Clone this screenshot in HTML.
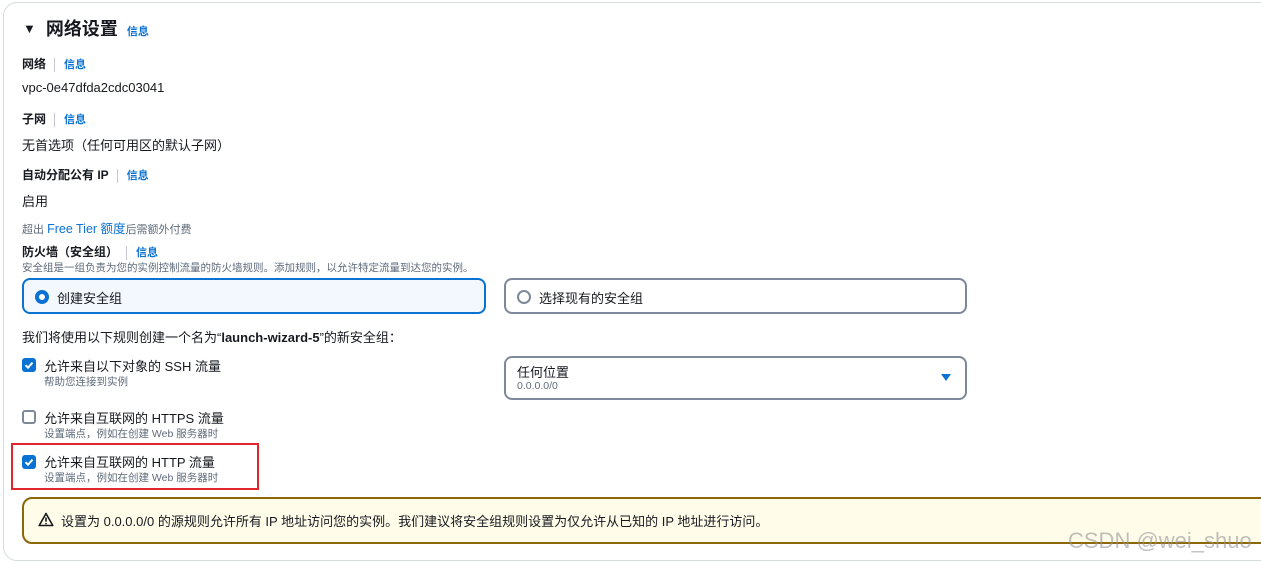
<!DOCTYPE html>
<html><head><meta charset="utf-8"><style>
*{margin:0;padding:0;box-sizing:border-box}
body{width:1261px;height:564px;overflow:hidden;background:#fff;font-family:"Liberation Sans","Noto Sans CJK SC",sans-serif;color:#16191f;position:relative}
.a{position:absolute;white-space:nowrap}
.card{position:absolute;left:3px;top:2px;width:1300px;height:559px;border:1px solid #d5dbdb;border-radius:14px}
.b{font-weight:bold;font-size:12px}
.t{font-size:13px}
.s{font-size:10.5px;color:#5f6b7a}
.info{color:#0972d3;font-size:11px;font-weight:bold}
.sep{display:inline-block;width:1px;height:14px;background:#c6c6cd;vertical-align:middle;margin:0 9px 0 8px}
.box{position:absolute;border:2px solid #7d8998;border-radius:8px}
.cb{position:absolute;width:14px;height:14px;border-radius:3px}
.on{background:#0972d3}
.off{border:2px solid #7d8998;background:#fff}
</style></head><body>
<div class="card"></div>
<div class="a" style="left:23px;top:15px;font-size:18px;font-weight:bold"><span style="font-size:13px;vertical-align:2px;margin-right:10px">▼</span>网络设置 <span class="info" style="margin-left:4px">信息</span></div>
<div class="a b" style="left:22px;top:55px">网络<span class="sep"></span><span class="info">信息</span></div>
<div class="a t" style="left:22px;top:80px">vpc-0e47dfda2cdc03041</div>
<div class="a b" style="left:22px;top:110px">子网<span class="sep"></span><span class="info">信息</span></div>
<div class="a t" style="left:22px;top:135px">无首选项（任何可用区的默认子网）</div>
<div class="a b" style="left:22px;top:166px">自动分配公有 IP<span class="sep"></span><span class="info">信息</span></div>
<div class="a t" style="left:22px;top:191px">启用</div>
<div class="a s" style="left:22px;top:218px;font-size:11px">超出 <span style="color:#0972d3;font-size:12.5px">Free Tier 额度</span>后需额外付费</div>
<div class="a b" style="left:22px;top:243px">防火墙（安全组）<span class="sep"></span><span class="info">信息</span></div>
<div class="a s" style="left:22px;top:260px">安全组是一组负责为您的实例控制流量的防火墙规则。添加规则，以允许特定流量到达您的实例。</div>
<div class="box" style="left:22px;top:278px;width:464px;height:36px;border-color:#0972d3;background:#f2f8fd"></div>
<div class="a" style="left:35px;top:290px;width:14px;height:14px;border-radius:50%;border:4px solid #0972d3;background:#fff"></div>
<div class="a t" style="left:57px;top:288px">创建安全组</div>
<div class="box" style="left:504px;top:278px;width:463px;height:36px"></div>
<div class="a" style="left:517px;top:290px;width:14px;height:14px;border-radius:50%;border:2px solid #7d8998"></div>
<div class="a t" style="left:539px;top:288px">选择现有的安全组</div>
<div class="a t" style="left:22px;top:327px">我们将使用以下规则创建一个名为“<b>launch-wizard-5</b>”的新安全组：</div>
<div class="cb on" style="left:22px;top:358px"><svg width="14" height="14"><path d="M3.5 7.2l2.5 2.5 4.5-5" stroke="#fff" stroke-width="2" fill="none"/></svg></div>
<div class="a t" style="left:44px;top:356px">允许来自以下对象的 SSH 流量</div>
<div class="a s" style="left:44px;top:374px">帮助您连接到实例</div>
<div class="box" style="left:504px;top:356px;width:463px;height:44px"></div>
<div class="a t" style="left:517px;top:362px">任何位置</div>
<div class="a s" style="left:517px;top:380px">0.0.0.0/0</div>
<div class="a" style="left:941px;top:374px;width:0;height:0;border-left:5px solid transparent;border-right:5px solid transparent;border-top:7px solid #0972d3"></div>
<div class="cb off" style="left:22px;top:410px"></div>
<div class="a t" style="left:44px;top:408px">允许来自互联网的 HTTPS 流量</div>
<div class="a s" style="left:44px;top:426px">设置端点，例如在创建 Web 服务器时</div>
<div class="a" style="left:11px;top:443px;width:248px;height:47px;border:2px solid #e0262c"></div>
<div class="cb on" style="left:22px;top:455px"><svg width="14" height="14"><path d="M3.5 7.2l2.5 2.5 4.5-5" stroke="#fff" stroke-width="2" fill="none"/></svg></div>
<div class="a t" style="left:44px;top:452px">允许来自互联网的 HTTP 流量</div>
<div class="a s" style="left:44px;top:470px">设置端点，例如在创建 Web 服务器时</div>
<div class="a" style="left:22px;top:497px;width:1300px;height:47px;border:2px solid #8d6605;border-radius:10px;background:#fffce9"></div>
<svg class="a" style="left:38px;top:512px" width="16" height="15"><path d="M8 1.5L1.2 13.5h13.6z" fill="none" stroke="#16191f" stroke-width="1.6" stroke-linejoin="round"/><path d="M8 5.5v4.2M8 11v1.3" stroke="#16191f" stroke-width="1.6"/></svg>
<div class="a t" style="left:61px;top:511px">设置为 0.0.0.0/0 的源规则允许所有 IP 地址访问您的实例。我们建议将安全组规则设置为仅允许从已知的 IP 地址进行访问。</div>
<div class="a" style="left:1068px;top:528px;font-size:22px;color:rgba(150,150,150,0.6)">CSDN @wei_shuo</div>
</body></html>
